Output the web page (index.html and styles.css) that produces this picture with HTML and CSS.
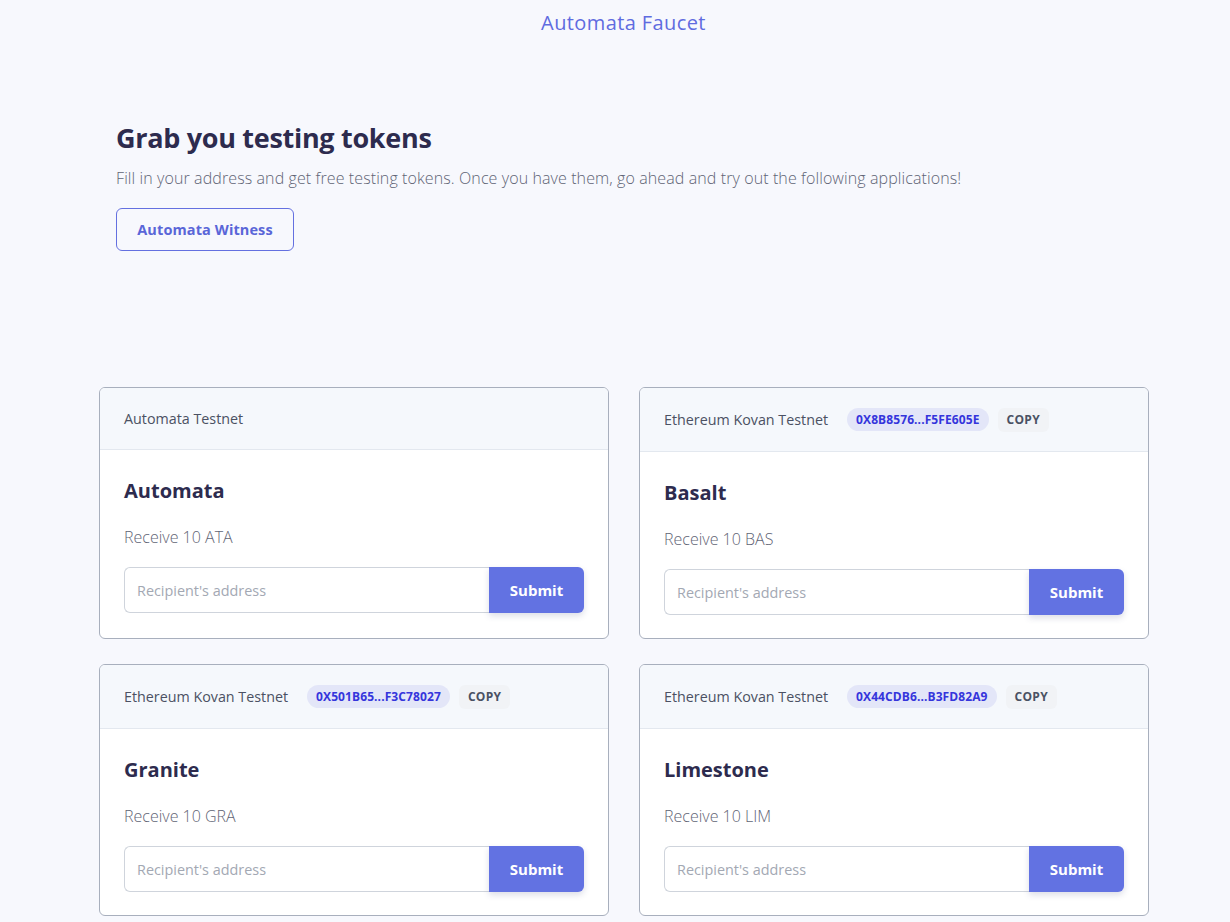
FILE: index.html
```html
<!DOCTYPE html>
<html lang="en">
<head>
<meta charset="utf-8">
<title>Automata Faucet</title>
<link rel="stylesheet" href="styles.css">
</head>
<body>
<header class="topbar">
  <div class="brand">Automata Faucet</div>
</header>
<main class="page">
  <section class="hero">
    <h1 class="hero-title">Grab you testing tokens</h1>
    <p class="hero-text">Fill in your address and get free testing tokens. Once you have them, go ahead and try out the following applications!</p>
    <button class="outline-btn">Automata Witness</button>
  </section>
  <section class="grid">
    <div class="card">
      <div class="card-head"><span class="net">Automata Testnet</span></div>
      <div class="card-body">
        <h2 class="token">Automata</h2>
        <p class="receive">Receive 10 ATA</p>
        <div class="field">
          <input class="addr" type="text" placeholder="Recipient's address">
          <button class="submit">Submit</button>
        </div>
      </div>
    </div>
    <div class="card">
      <div class="card-head badge-head"><span class="net">Ethereum Kovan Testnet</span><span class="badge">0x8B8576...F5FE605E</span><button class="copy">COPY</button></div>
      <div class="card-body">
        <h2 class="token">Basalt</h2>
        <p class="receive">Receive 10 BAS</p>
        <div class="field">
          <input class="addr" type="text" placeholder="Recipient's address">
          <button class="submit">Submit</button>
        </div>
      </div>
    </div>
    <div class="card">
      <div class="card-head badge-head"><span class="net">Ethereum Kovan Testnet</span><span class="badge">0x501B65...F3C78027</span><button class="copy">COPY</button></div>
      <div class="card-body">
        <h2 class="token">Granite</h2>
        <p class="receive">Receive 10 GRA</p>
        <div class="field">
          <input class="addr" type="text" placeholder="Recipient's address">
          <button class="submit">Submit</button>
        </div>
      </div>
    </div>
    <div class="card">
      <div class="card-head badge-head"><span class="net">Ethereum Kovan Testnet</span><span class="badge">0x44CDB6...B3FD82A9</span><button class="copy">COPY</button></div>
      <div class="card-body">
        <h2 class="token">Limestone</h2>
        <p class="receive">Receive 10 LIM</p>
        <div class="field">
          <input class="addr" type="text" placeholder="Recipient's address">
          <button class="submit">Submit</button>
        </div>
      </div>
    </div>
  </section>
</main>
</body>
</html>
```
FILE: styles.css
```css
* { box-sizing: border-box; }
html, body { margin: 0; padding: 0; }
body {
  background: #f7f8fd;
  font-family: "Open Sans", "Noto Sans", sans-serif;
  color: #2d2b4e;
  overflow: hidden;
}
.topbar {
  height: 44px;
  display: flex;
  justify-content: center;
  align-items: center;
  padding-left: 17px;
}
.brand {
  color: #5f6be0;
  font-size: 20px;
  font-weight: 400;
  letter-spacing: 0.4px;
}
.page {
  padding-left: 99px;
  width: 1149px;
}
.hero {
  padding: 76px 0 0 17px;
}
.hero-title {
  margin: 0;
  font-size: 27px;
  line-height: 36px;
  font-weight: 700;
  color: #2d2b4e;
  letter-spacing: -0.3px;
}
.hero-text {
  margin: 10px 0 0;
  font-size: 16px;
  line-height: 24px;
  font-weight: 300;
  color: #5f6475;
  letter-spacing: 0.1px;
}
.outline-btn {
  margin-top: 18px;
  height: 43px;
  width: 178px;
  border: 1px solid #6470e0;
  border-radius: 6px;
  background: transparent;
  color: #5a66d8;
  font-family: inherit;
  font-size: 14.5px;
  font-weight: 700;
  letter-spacing: 0.1px;
  padding: 0;
}
.grid {
  margin-top: 136px;
  display: grid;
  grid-template-columns: 510px 510px;
  column-gap: 30px;
  row-gap: 25px;
}
.card {
  background: #ffffff;
  border: 1px solid #a8afbd;
  border-radius: 6px;
  overflow: hidden;
}
.card-head {
  background: #f5f8fc;
  border-bottom: 1px solid #e3e8ef;
  height: 62px;
  display: flex;
  align-items: center;
  padding: 0 24px;
}
.badge-head { height: 64px; }
.net {
  font-size: 14.3px;
  color: #4b5163;
}
.badge {
  margin-left: 19px;
  background: #e3e6f8;
  color: #3535dc;
  font-size: 12px;
  font-weight: 700;
  text-transform: uppercase;
  border-radius: 12px;
  height: 23px;
  line-height: 23px;
  padding: 0 9px;
  letter-spacing: 0.1px;
}
.copy {
  margin-left: 9px;
  background: #f1f3f6;
  color: #4a5163;
  border: none;
  border-radius: 6px;
  font-family: inherit;
  font-size: 12px;
  font-weight: 700;
  letter-spacing: 0.3px;
  height: 24px;
  padding: 0 9px;
}
.card-body {
  padding: 27px 24px 23px;
}
.token {
  margin: 0;
  font-size: 20px;
  line-height: 28px;
  font-weight: 700;
  color: #2d2b4e;
}
.receive {
  margin: 20px 0 0;
  font-size: 16px;
  line-height: 24px;
  font-weight: 300;
  color: #5f6475;
}
.field {
  margin-top: 18px;
  display: flex;
  height: 46px;
}
.addr {
  flex: 1;
  height: 46px;
  border: 1px solid #cfd4dc;
  border-right: none;
  border-radius: 6px 0 0 6px;
  padding: 0 12px;
  font-family: inherit;
  font-size: 14.4px;
  background: #fff;
  outline: none;
}
.addr::placeholder { color: #a3a8b3; font-weight: 400; }
.submit {
  width: 95px;
  height: 46px;
  border: none;
  border-radius: 0 6px 6px 0;
  background: #6272e2;
  color: #ffffff;
  font-family: inherit;
  font-size: 15px;
  font-weight: 700;
  box-shadow: 0 3px 6px rgba(60, 70, 120, 0.18);
  padding: 0;
}
```
